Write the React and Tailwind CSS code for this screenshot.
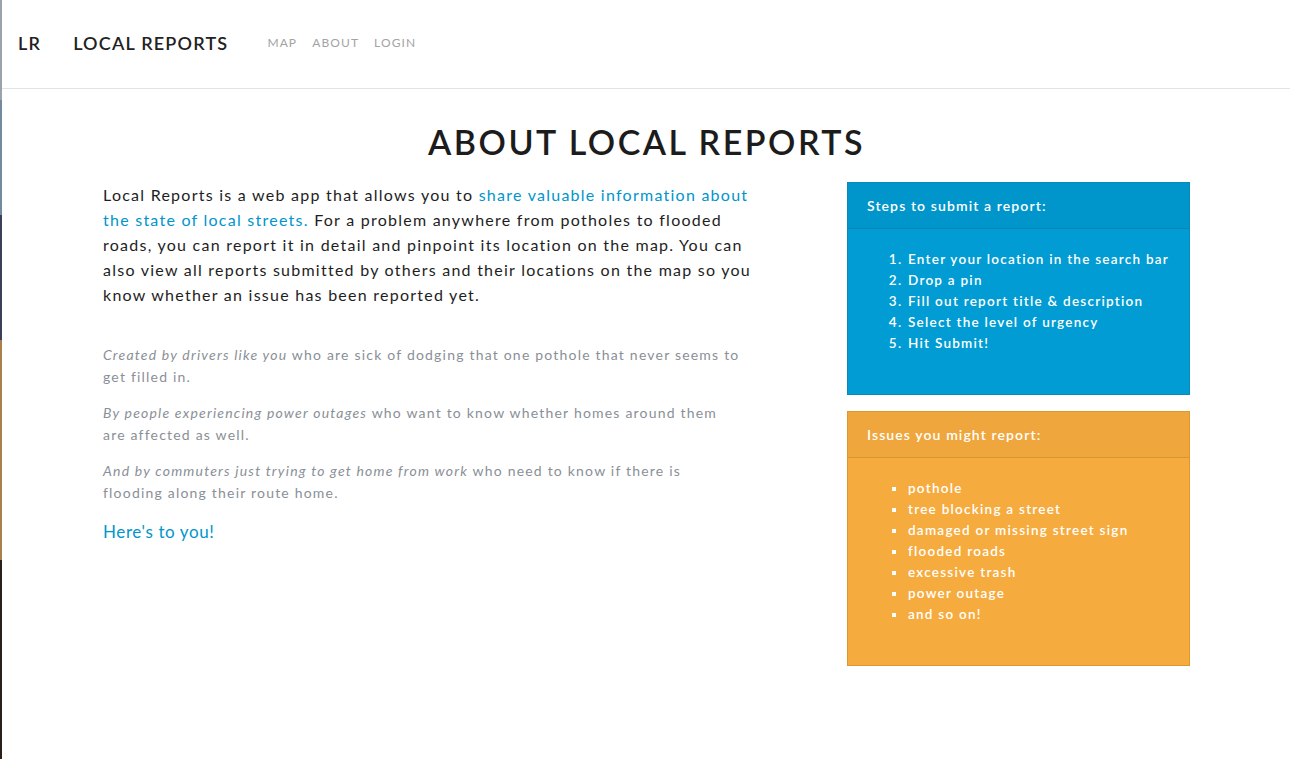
import React from 'react';

const steps = [
  'Enter your location in the search bar',
  'Drop a pin',
  'Fill out report title & description',
  'Select the level of urgency',
  'Hit Submit!',
];

const issues = [
  'pothole',
  'tree blocking a street',
  'damaged or missing street sign',
  'flooded roads',
  'excessive trash',
  'power outage',
  'and so on!',
];

export default function App() {
  return (
    <div className="flex min-h-[759px] bg-white font-['Lato',sans-serif]">
      {/* edge of the background photo */}
      <div className="w-[2px] flex flex-col shrink-0">
        <div className="h-[100px] bg-[#9aa2ab]" />
        <div className="h-[115px] bg-[#7289a0]" />
        <div className="h-[125px] bg-[#3b3f5a]" />
        <div className="h-[220px] bg-[#a8804c]" />
        <div className="flex-1 bg-[#2b1f19]" />
      </div>

      <div className="flex-1">
        {/* Header */}
        <header className="h-[89px] flex items-center border-b border-[#e3e3e3] pl-[16px] pb-[2px]">
          <span className="text-[18px] font-semibold tracking-[1.2px] text-[#222]">LR</span>
          <span className="ml-[32px] text-[18px] font-semibold tracking-[1.2px] text-[#222]">LOCAL REPORTS</span>
          <nav className="ml-[39px] flex gap-[15px] text-[12px] tracking-[1.1px] text-[#a3a3a3]">
            <span>MAP</span>
            <span>ABOUT</span>
            <span>LOGIN</span>
          </nav>
        </header>

        {/* Content */}
        <main className="w-[1087px] ml-[101px]">
          <h1 className="text-center text-[34px] font-semibold tracking-[2.5px] text-[#1c1c1c] mt-[33px] leading-[40px]">
            ABOUT LOCAL REPORTS
          </h1>

          <div className="flex justify-between mt-[20px]">
            <div className="w-[655px] -mt-[1px]">
              <p className="text-[16px] leading-[25px] tracking-[1.25px] text-[#1e1e1e] mt-[1px]">
                Local Reports is a web app that allows you to{' '}
                <span className="text-[#0095cc]">share valuable information about the state of local streets.</span>{' '}
                For a problem anywhere from potholes to flooded roads, you can report it in detail and pinpoint its
                location on the map. You can also view all reports submitted by others and their locations on the map
                so you know whether an issue has been reported yet.
              </p>

              <div className="mt-[37px] w-[640px] flex flex-col gap-[14px] text-[14px] leading-[22px] tracking-[1.2px] text-[#8a9097]">
                <p>
                  <em>Created by drivers like you</em> who are sick of dodging that one pothole that never seems to get
                  filled in.
                </p>
                <p>
                  <em>By people experiencing power outages</em> who want to know whether homes around them are affected
                  as well.
                </p>
                <p>
                  <em>And by commuters just trying to get home from work</em> who need to know if there is flooding
                  along their route home.
                </p>
              </div>

              <p className="mt-[15px] text-[17px] tracking-[0.6px] text-[#0095cc]">Here's to you!</p>
            </div>

            <div className="w-[343px] flex flex-col gap-[16px]">
              <div className="h-[213px] bg-[#009cd3] border border-[#0a88b8] text-white">
                <div className="h-[46px] flex items-center px-[19px] bg-[#0096cb] border-b border-[#0a86b3] text-[14px] font-semibold tracking-[1.1px]">
                  Steps to submit a report:
                </div>
                <ol className="mt-[20px] pl-[59px] list-decimal text-[13.5px] font-semibold leading-[21px] tracking-[1.25px]">
                  {steps.map(s => (
                    <li key={s} className="pl-[1px]">{s}</li>
                  ))}
                </ol>
              </div>

              <div className="h-[255px] bg-[#f6ab3e] border border-[#dc972f] text-white">
                <div className="h-[46px] flex items-center px-[19px] bg-[#efa63c] border-b border-[#d9962f] text-[14px] font-semibold tracking-[1.1px]">
                  Issues you might report:
                </div>
                <ul className="mt-[20px] pl-[59px] list-[square] text-[13.5px] font-semibold leading-[21px] tracking-[1.25px]">
                  {issues.map(s => (
                    <li key={s} className="pl-[1px]">{s}</li>
                  ))}
                </ul>
              </div>
            </div>
          </div>
        </main>
      </div>
    </div>
  );
}
